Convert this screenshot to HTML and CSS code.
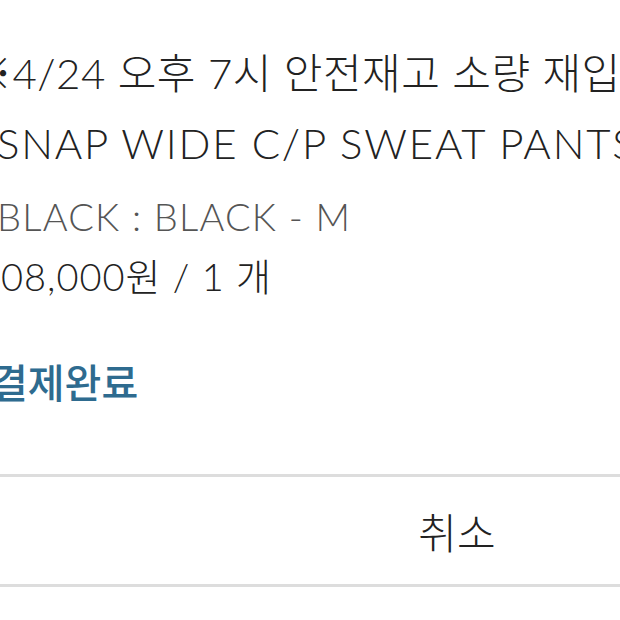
FILE: index.html
```html
<!DOCTYPE html>
<html lang="ko">
<head>
<meta charset="utf-8">
<title>주문 상세</title>
<link rel="stylesheet" href="styles.css">
</head>
<body>
<div class="order">
  <div class="item">
    <p class="notice">※4/24 오후 7시 안전재고 소량 재입고</p>
    <p class="name">SNAP WIDE C/P SWEAT PANTS</p>
    <p class="option">BLACK : BLACK - M</p>
    <p class="price">108,000원 / 1 개</p>
    <p class="status">결제완료</p>
  </div>
  <div class="actions">
    <button class="btn-cancel" type="button">취소</button>
  </div>
</div>
</body>
</html>
```

FILE: styles.css
```css
html, body {
  margin: 0;
  padding: 0;
  background: #ffffff;
  overflow: hidden;
}
body {
  width: 620px;
  height: 620px;
  font-family: "Lato", "Noto Sans CJK KR", sans-serif;
  color: #222222;
}
.order {
  width: 620px;
}
.item {
  padding-top: 38px;
  white-space: nowrap;
}
.item p {
  margin: 0;
}
.notice {
  margin-left: -30px !important;
  font-size: 42px;
  font-weight: 300;
  line-height: 70px;
  letter-spacing: 0.5px;
}
.name {
  margin-left: -3px !important;
  font-size: 42px;
  font-weight: 300;
  line-height: 70px;
  letter-spacing: 1.8px;
}
.option {
  margin-left: -3px !important;
  font-size: 38px;
  font-weight: 300;
  color: #555555;
  line-height: 76px;
  letter-spacing: 1.2px;
}
.price {
  margin-left: -22px !important;
  font-size: 38px;
  font-weight: 300;
  line-height: 44px;
  letter-spacing: 1px;
}
.status {
  margin-top: 60px !important;
  margin-left: -9px !important;
  font-family: "Noto Sans CJK KR", sans-serif;
  font-size: 40px;
  font-weight: 500;
  color: #2e6b8f;
  line-height: 46px;
}
.actions {
  margin-top: 70px;
  border-top: 3px solid #dddddd;
  border-bottom: 3px solid #dddddd;
  height: 107px;
  display: flex;
  justify-content: flex-end;
}
.btn-cancel {
  width: 326px;
  border: 0;
  background: transparent;
  padding: 0;
  font-family: "Noto Sans CJK KR", sans-serif;
  font-size: 42px;
  font-weight: 300;
  color: #222222;
  cursor: pointer;
}
```
